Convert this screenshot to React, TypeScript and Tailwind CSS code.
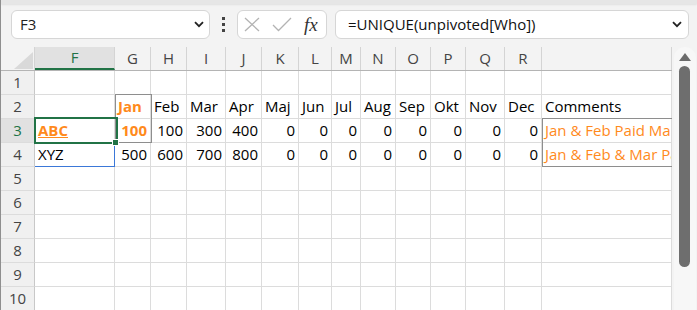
import React from "react";

const cols = [
  { l: "F", w: "w-[80px]" },
  { l: "G", w: "w-[36px]" },
  { l: "H", w: "w-[36px]" },
  { l: "I", w: "w-[39px]" },
  { l: "J", w: "w-[36px]" },
  { l: "K", w: "w-[37px]" },
  { l: "L", w: "w-[33px]" },
  { l: "M", w: "w-[29px]" },
  { l: "N", w: "w-[35px]" },
  { l: "O", w: "w-[35px]" },
  { l: "P", w: "w-[35px]" },
  { l: "Q", w: "w-[39px]" },
  { l: "R", w: "w-[37px]" },
  { l: "", w: "w-[130px]" },
];

type Cell = { t?: string; num?: boolean; cls?: string };

const months = ["Jan", "Feb", "Mar", "Apr", "Maj", "Jun", "Jul", "Aug", "Sep", "Okt", "Nov", "Dec"];

const orange = "text-[#ff8a1c]";

const rows: Cell[][] = [
  [],
  [
    {},
    { t: "Jan", cls: `font-bold ${orange} bg-[#efefef]` },
    ...months.slice(1).map((m) => ({ t: m })),
    { t: "Comments" },
  ],
  [
    { t: "ABC", cls: `font-bold underline ${orange} bg-[#efefef]` },
    { t: "100", num: true, cls: `font-bold ${orange} bg-[#efefef]` },
    { t: "100", num: true },
    { t: "300", num: true },
    { t: "400", num: true },
    ...Array.from({ length: 8 }, () => ({ t: "0", num: true })),
    { t: "Jan & Feb Paid March", cls: `${orange} bg-[#efefef]` },
  ],
  [
    { t: "XYZ", cls: "border-r-[#3b78d8] border-b-[#3b78d8]" },
    { t: "500", num: true },
    { t: "600", num: true },
    { t: "700", num: true },
    { t: "800", num: true },
    ...Array.from({ length: 8 }, () => ({ t: "0", num: true })),
    { t: "Jan & Feb & Mar Paid", cls: `${orange} bg-[#efefef]` },
  ],
  [],
  [],
  [],
  [],
  [],
  [],
];

function Chevron({ className }: { className?: string }) {
  return (
    <svg width="10" height="7" viewBox="0 0 10 7" className={className}>
      <path d="M1 1.2 L5 5.2 L9 1.2" fill="none" stroke="#222" strokeWidth="1.8" />
    </svg>
  );
}

export default function App() {
  return (
    <div
      className="w-[697px] h-[310px] overflow-hidden bg-[#f3f3f3] border-l border-[#8f8f8f] flex flex-col text-[15px] text-black"
      style={{ fontFamily: '"Open Sans", "Noto Sans", sans-serif' }}
    >
      {/* toolbar */}
      <div className="h-[47px] shrink-0 flex flex-col">
        <div className="h-[4px] bg-[#e6e6e6] shadow-[0_1px_2px_rgba(0,0,0,0.08)]" />
        <div className="flex items-center pt-[6px] pl-[10px]">
          <div className="w-[199px] h-[29px] bg-white border border-[#d6d6d6] rounded-[6px] flex items-center justify-between pl-[8px] pr-[5px]">
            <span className="text-[#222]">F3</span>
            <Chevron />
          </div>
          <div className="w-[27px] flex flex-col items-center gap-[3px] ml-[0px]">
            <div className="w-[3px] h-[3px] bg-[#444]" />
            <div className="w-[3px] h-[3px] bg-[#444]" />
            <div className="w-[3px] h-[3px] bg-[#444]" />
          </div>
          <div className="w-[90px] h-[29px] bg-white border border-[#d6d6d6] rounded-[6px] flex items-center pl-[6px]">
            <svg width="16" height="15" viewBox="0 0 16 15">
              <path d="M1 1 L15 14 M15 1 L1 14" stroke="#b3b3b3" strokeWidth="1.3" fill="none" />
            </svg>
            <svg width="20" height="15" viewBox="0 0 20 15" className="ml-[12px]">
              <path d="M1 8 L6.5 13.5 L19 1" stroke="#b3b3b3" strokeWidth="1.3" fill="none" />
            </svg>
            <span
              className="ml-[12px] italic text-[19px] leading-none text-[#333]"
              style={{ fontFamily: '"Liberation Serif", "DejaVu Serif", serif' }}
            >
              fx
            </span>
          </div>
          <div className="ml-[8px] w-[354px] h-[29px] bg-white border border-[#d6d6d6] rounded-[6px] flex items-center justify-between pl-[12px] pr-[6px]">
            <span className="text-[#111]">=UNIQUE(unpivoted[Who])</span>
            <Chevron />
          </div>
        </div>
      </div>

      {/* sheet */}
      <div className="flex flex-1">
        <div className="relative w-[672px] overflow-hidden">
          {/* header row */}
          <div className="flex h-[24px] border-b border-[#b4b4b4] bg-[#f3f3f3]">
            <div className="w-[34px] relative border-r border-[#d4d4d4]">
              <svg width="19" height="17" viewBox="0 0 19 17" className="absolute right-[1px] bottom-[1px]">
                <path d="M19 0 L19 17 L0 17 Z" fill="#d9d9d9" />
              </svg>
            </div>
            {cols.map((c, i) => (
              <div
                key={i}
                className={`${c.w} shrink-0 flex items-center justify-center text-[#444] ${
                  i === 0
                    ? "bg-[#e1e1e1] text-[#217346] border-b-2 border-[#217346] border-r border-r-[#d4d4d4]"
                    : "border-r border-[#d4d4d4]"
                }`}
              >
                {c.l}
              </div>
            ))}
          </div>
          {/* rows */}
          {rows.map((r, ri) => (
            <div key={ri} className="flex h-[24px]">
              <div
                className={`w-[34px] shrink-0 flex items-center justify-center border-r border-b border-[#c8c8c8] border-b-[#dcdcdc] ${
                  ri === 2 ? "bg-[#e1e1e1] text-[#217346]" : "bg-[#f0f0f0] text-[#444]"
                }`}
              >
                {ri + 1}
              </div>
              {cols.map((c, ci) => {
                const cell = r[ci] || {};
                return (
                  <div
                    key={ci}
                    className={`${c.w} shrink-0 bg-white border-r border-b border-[#dcdcdc] flex items-center px-[3px] overflow-hidden whitespace-nowrap ${
                      cell.num ? "justify-end" : "justify-start"
                    } ${cell.cls || ""}`}
                  >
                    {cell.t}
                  </div>
                );
              })}
            </div>
          ))}

          {/* overlays */}
          <div className="absolute left-[114px] top-[47px] w-[37px] h-[49px] border border-[#8e8e8e] pointer-events-none" />
          <div className="absolute left-[541px] top-[71px] w-[140px] h-[49px] border border-[#8e8e8e] pointer-events-none" />
          <div className="absolute left-[33px] top-[70px] w-[84px] h-[27px] border-2 border-[#217346] pointer-events-none" />
          <div className="absolute left-[111px] top-[92px] w-[7px] h-[7px] bg-[#217346] border border-white pointer-events-none" />
        </div>

        {/* scrollbar */}
        <div className="w-[25px] bg-[#f3f3f3] flex flex-col items-center">
          <div className="w-[22px] mt-[0px] h-full rounded-t-[11px] bg-[#f7f7f7] flex flex-col items-center pt-[6px]">
            <svg width="12" height="8" viewBox="0 0 12 8">
              <path d="M6 0 L12 8 L0 8 Z" fill="#6b6b6b" />
            </svg>
            <div className="mt-[5px] w-[11px] h-[201px] rounded-full bg-[#6e6e6e]" />
          </div>
        </div>
      </div>
    </div>
  );
}
